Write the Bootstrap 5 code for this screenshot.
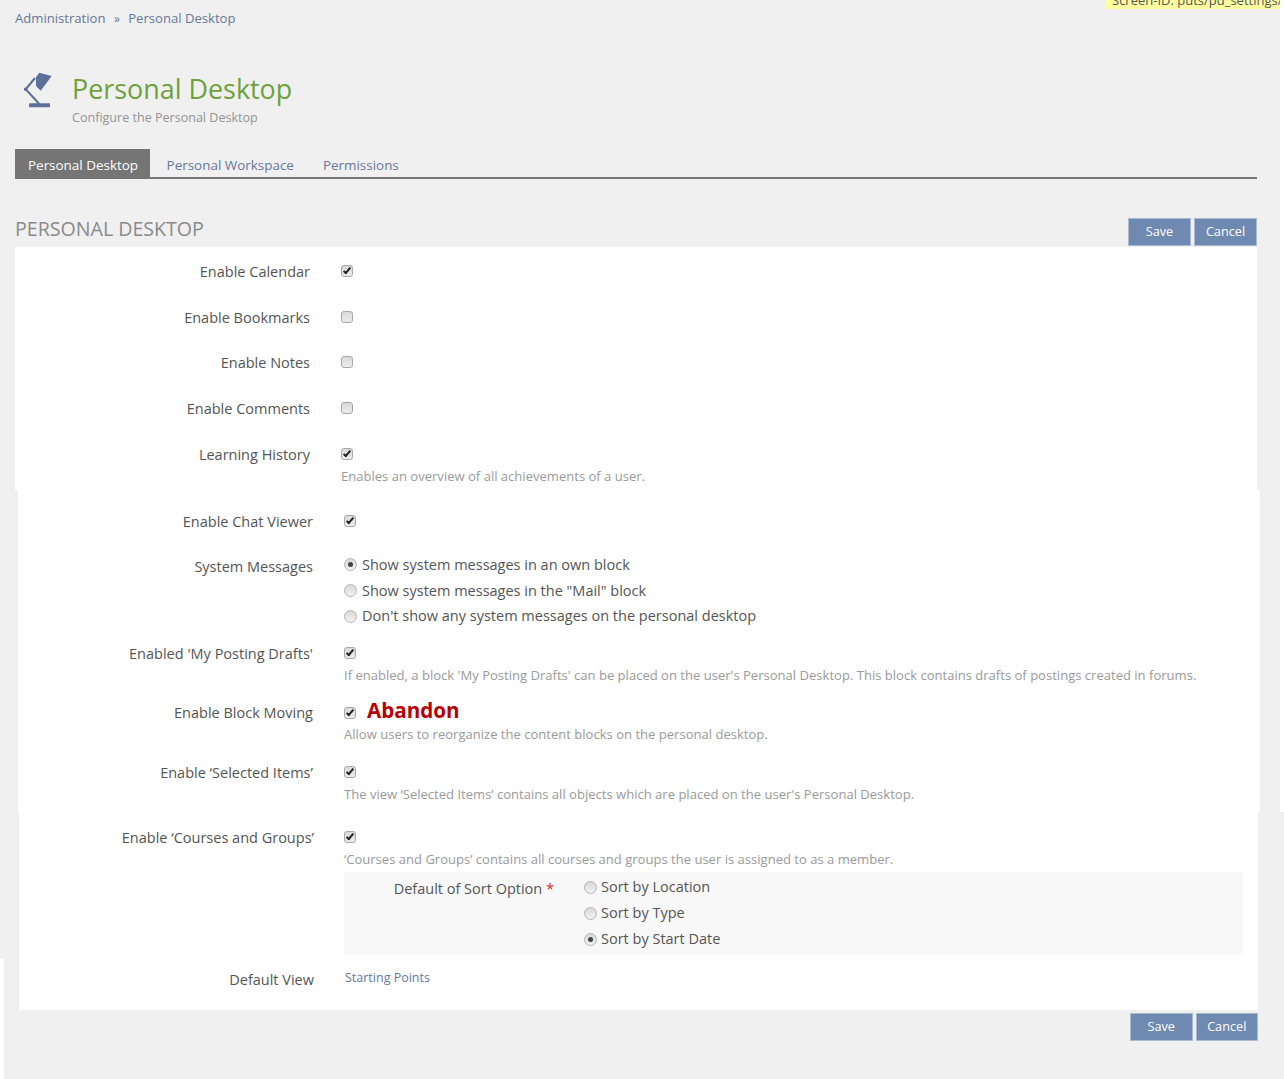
<!DOCTYPE html>
<html lang="en">
<head>
<meta charset="utf-8">
<title>Personal Desktop</title>
<link href="https://cdn.jsdelivr.net/npm/bootstrap@5.3.0/dist/css/bootstrap.min.css" rel="stylesheet">
<style>
html,body{height:1079px;overflow:hidden}
body{background:#fff;font-family:"Open Sans","Noto Sans",sans-serif;font-size:14.5px;color:#555;position:relative}
.stage-top{background:#f0f0f0;height:812px;margin-right:4px}
.stage-mid{background:#f0f0f0;height:147px}
.stage-low{background:#f0f0f0;height:120px;margin-left:4px}
.pageflow{position:absolute;inset:0}
.idnote{position:absolute;top:-9px;left:1106px;width:174px;height:18px;background:#ffff9f;color:#555;font-size:13px;white-space:nowrap;overflow:hidden;padding-left:6px;line-height:18px}
.crumbs{padding:9px 0 0 15px;height:60px;font-size:13.1px;line-height:18px}
.crumbs a{color:#66789a;text-decoration:none}
.crumbs span{margin:0 5px;font-size:12px;color:#66789a}
.headrow{padding-left:24px;height:89px;display:flex}
.lampbox{width:30px;height:36px;margin-top:12px;flex:none}
.headtxt{margin-left:18px;padding-top:9px}
.headtxt h1{color:#6ea03c;font-size:26.9px;line-height:38px;font-weight:400;margin:0;padding-top:1px}
.headtxt p{color:#949494;font-size:12.55px;line-height:18px;margin:0;padding-top:1px}
.tabbar{margin:0 27px 0 15px;border-bottom:2px solid #757575;height:30px;display:flex;font-size:13.45px}
.tabbar a{text-decoration:none;color:#66789a;line-height:32px;height:28px;padding:0 12px 0 17px}
.tabbar a.on{background:#757575;color:#fff;padding:0 12px 0 13px}
.tabbar a.on+a{padding-left:16.500px}
.sechead{margin:0 27px 0 15px;height:68px;display:flex;justify-content:space-between;align-items:flex-end}
.sechead h2{font-size:19.6px;font-weight:400;color:#8a8a8a;text-transform:uppercase;margin:0 0 4px;line-height:28px}
.actbtn{background:#6f8ab0;color:#fff;border:1px solid #a9bad0;border-radius:0;font-size:12.7px;line-height:18px;height:28px;padding:0 0 2px;width:63px;margin-left:3px;margin-bottom:1px}
.actbtn:hover{background:#6f8ab0;color:#fff}
.slice{background:#fff}
.slice-a{margin:0 27px 0 15px;height:243px;padding-top:15px}
.slice-b{margin:0 24px 0 18px;height:322px;padding-top:22px}
.slice-c{margin:0 26px 0 19px;height:198px;padding-top:16px}
.fline{display:flex}
.fl-46{height:45.700px}
.slice-b .fl-46{height:45px}
.fl-87{height:87px}
.fl-59{height:59px}
.fl-60{height:60px}
.fl-gap{margin-top:11px}
.flabel{width:295px;text-align:right;flex:none;line-height:20px;color:#555}
.flabel-drop{padding-top:4px}
.fbody{margin-left:31px;flex:1;min-width:0}
.slice-c .fbody{margin-left:30px}
.fnote{font-size:13.050px;line-height:18px;color:#9a9a9a;margin-top:7px}
.fnote-tight{margin-top:3px}
.tick{appearance:none;display:block;width:12px;height:12px;margin:3px 0 0;border:1px solid #a8a8a8;border-radius:3px;background:linear-gradient(#d9d9d9,#ececec);position:relative}
.tick:checked::after{content:"";position:absolute;left:3px;top:0;width:4px;height:8px;border:solid #222;border-width:0 2px 2px 0;transform:rotate(40deg)}
.tick-low{margin-top:6px}
.dot{appearance:none;display:block;width:13px;height:13px;margin:0;border:1px solid #b5b5b5;border-radius:50%;background:linear-gradient(#d8d8d8,#f2f2f2);position:relative;flex:none}
.dot:checked::after{content:"";position:absolute;left:3px;top:3px;width:5px;height:5px;border-radius:50%;background:#444}
.pick{display:flex;align-items:center;gap:5px;height:25.700px;color:#555;margin:0}
.picks-up{margin-top:-5px}
.abandon-line{margin-top:-5px}
.abandon{color:#b80000;font-weight:700;font-size:20.600px;line-height:24px;margin-left:11px}
.subbox{background:#f8f8f8;margin-top:4px;width:899px;height:83px;display:flex;padding-top:2px}
.sublabel{width:210px;text-align:right;flex:none;color:#555;line-height:20px;padding-top:5px}
.req{color:#d9262e}
.sublist{margin-left:30px}
.sublist .pick{gap:4px;height:26px}
.startlink{color:#66789a;font-size:12.500px;text-decoration:none;line-height:18px;margin-left:1px}
.footacts{margin:3px 26px 0 19px;display:flex;justify-content:flex-end}
.footacts .actbtn{width:62.500px}
</style>
</head>
<body>
<div class="stage-top"></div>
<div class="stage-mid"></div>
<div class="stage-low"></div>
<div class="pageflow">
  <div class="idnote">Screen-ID: puts/pd_settings/</div>
  <div class="crumbs"><a href="#">Administration</a> <span>»</span> <a href="#">Personal Desktop</a></div>
  <div class="headrow">
    <svg class="lampbox" viewBox="0 0 30 36" aria-hidden="true">
      <path d="M12 5.300 15.300 .7 27.700 4 16.700 18.700 12 14z" fill="#5a6f9a"/>
      <path d="M11 6 1.700 17.300 15.300 32" fill="none" stroke="#5a6f9a" stroke-width="2"/>
      <circle cx="1.700" cy="17.300" r="1.800" fill="#5a6f9a"/>
      <rect x="5" y="31.300" width="21" height="4" rx="1" fill="#5a6f9a"/>
    </svg>
    <div class="headtxt">
      <h1>Personal Desktop</h1>
      <p>Configure the Personal Desktop</p>
    </div>
  </div>
  <div class="tabbar">
    <a class="on" href="#">Personal Desktop</a>
    <a href="#">Personal Workspace</a>
    <a href="#">Permissions</a>
  </div>
  <div class="sechead">
    <h2>Personal Desktop</h2>
    <div class="d-flex"><button class="btn actbtn">Save</button><button class="btn actbtn">Cancel</button></div>
  </div>
  <div class="slice slice-a">
    <div class="fline fl-46"><div class="flabel">Enable Calendar</div><div class="fbody"><input class="tick" type="checkbox" checked></div></div>
    <div class="fline fl-46"><div class="flabel">Enable Bookmarks</div><div class="fbody"><input class="tick" type="checkbox"></div></div>
    <div class="fline fl-46"><div class="flabel">Enable Notes</div><div class="fbody"><input class="tick" type="checkbox"></div></div>
    <div class="fline fl-46"><div class="flabel">Enable Comments</div><div class="fbody"><input class="tick" type="checkbox"></div></div>
    <div class="fline"><div class="flabel">Learning History</div><div class="fbody"><input class="tick" type="checkbox" checked><div class="fnote">Enables an overview of all achievements of a user.</div></div></div>
  </div>
  <div class="slice slice-b">
    <div class="fline fl-46"><div class="flabel">Enable Chat Viewer</div><div class="fbody"><input class="tick" type="checkbox" checked></div></div>
    <div class="fline fl-87"><div class="flabel">System Messages</div><div class="fbody picks-up">
      <label class="pick"><input class="dot" type="radio" name="sm" checked>Show system messages in an own block</label>
      <label class="pick"><input class="dot" type="radio" name="sm">Show system messages in the "Mail" block</label>
      <label class="pick"><input class="dot" type="radio" name="sm">Don't show any system messages on the personal desktop</label>
    </div></div>
    <div class="fline fl-59"><div class="flabel">Enabled 'My Posting Drafts'</div><div class="fbody"><input class="tick" type="checkbox" checked><div class="fnote">If enabled, a block 'My Posting Drafts' can be placed on the user's Personal Desktop. This block contains drafts of postings created in forums.</div></div></div>
    <div class="fline fl-60"><div class="flabel">Enable Block Moving</div><div class="fbody"><div class="d-flex align-items-center abandon-line"><input class="tick tick-low" type="checkbox" checked><span class="abandon">Abandon</span></div><div class="fnote fnote-tight">Allow users to reorganize the content blocks on the personal desktop.</div></div></div>
    <div class="fline"><div class="flabel">Enable ‘Selected Items’</div><div class="fbody"><input class="tick" type="checkbox" checked><div class="fnote">The view ‘Selected Items’ contains all objects which are placed on the user's Personal Desktop.</div></div></div>
  </div>
  <div class="slice slice-c">
    <div class="fline"><div class="flabel">Enable ‘Courses and Groups’</div><div class="fbody"><input class="tick" type="checkbox" checked><div class="fnote">‘Courses and Groups’ contains all courses and groups the user is assigned to as a member.</div>
      <div class="subbox"><div class="sublabel">Default of Sort Option <span class="req">*</span></div><div class="sublist">
        <label class="pick"><input class="dot" type="radio" name="so">Sort by Location</label>
        <label class="pick"><input class="dot" type="radio" name="so">Sort by Type</label>
        <label class="pick"><input class="dot" type="radio" name="so" checked>Sort by Start Date</label>
      </div></div>
    </div></div>
    <div class="fline fl-gap"><div class="flabel flabel-drop">Default View</div><div class="fbody"><a class="startlink" href="#">Starting Points</a></div></div>
  </div>
  <div class="footacts"><button class="btn actbtn">Save</button><button class="btn actbtn">Cancel</button></div>
</div>
</body>
</html>
